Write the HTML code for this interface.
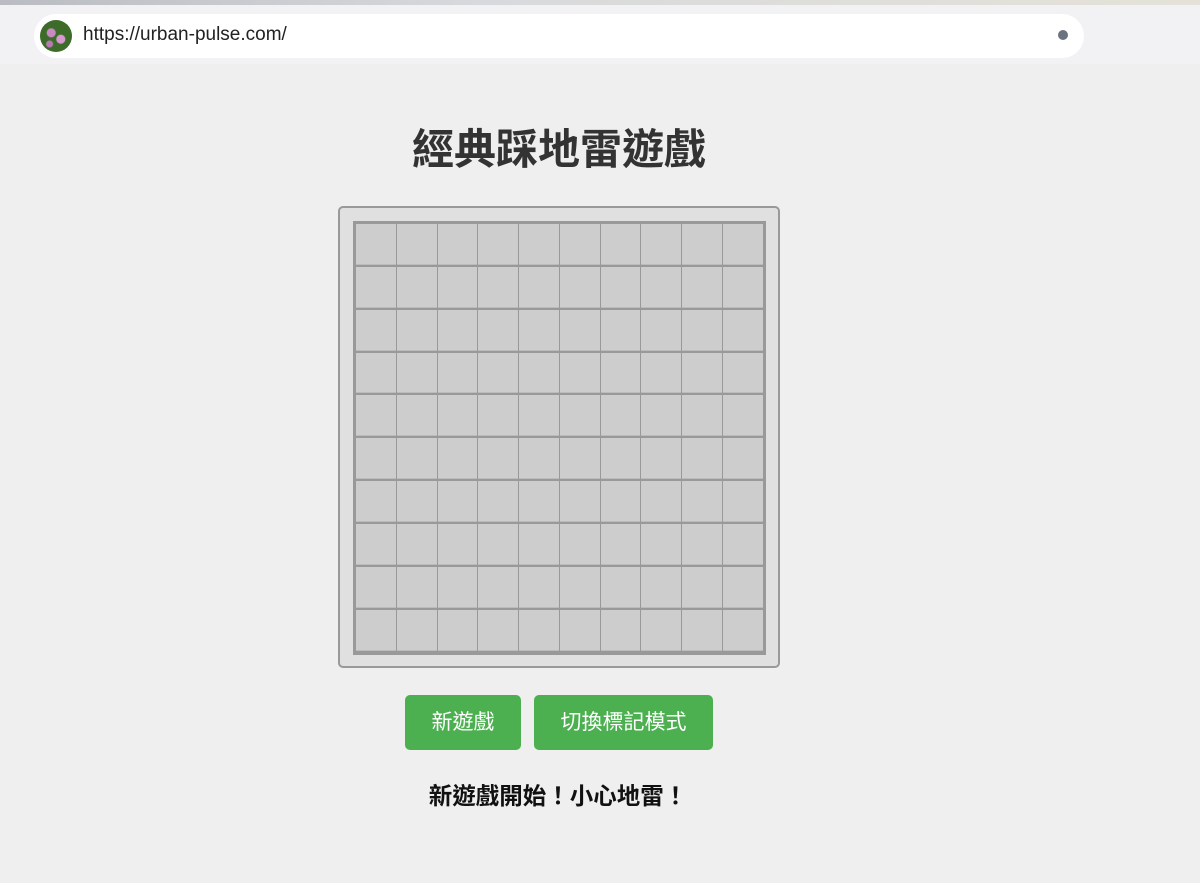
<!DOCTYPE html>
<html><head><meta charset="utf-8"><style>
body{margin:0;width:1200px;height:883px;background:#efefef;font-family:"Liberation Sans","Noto Sans CJK TC",sans-serif;position:relative;overflow:hidden}
.top{position:absolute;left:0;top:0;width:1200px;height:64px;background:#f2f2f4}
.strip{position:absolute;left:0;top:0;width:1200px;height:5px;background:linear-gradient(90deg,#b9bcc2,#d8d9dc 40%,#e4e2d8)}
.pill{position:absolute;left:34px;top:14px;width:1050px;height:44px;background:#fff;border-radius:22px}
.fav{position:absolute;left:40px;top:20px;width:32px;height:32px;border-radius:50%;background:radial-gradient(circle at 35% 40%,#c88ac0 0 4px,transparent 5px),radial-gradient(circle at 65% 60%,#d79ad0 0 4px,transparent 5px),radial-gradient(circle at 30% 75%,#b77ab5 0 3px,transparent 4px),#3d6b2a}
.url{position:absolute;left:83px;top:24px;font-size:19px;color:#222}
.dot{position:absolute;left:1058px;top:30px;width:10px;height:10px;border-radius:50%;background:#6b7280}
h1{position:absolute;left:0;width:1118px;top:116px;margin:0;text-align:center;font-size:42px;font-weight:bold;color:#333}
.box{position:absolute;left:338px;top:206px;width:438px;height:458px;border:2px solid #999;border-radius:5px;background:#e0e0e0}
.grid{position:absolute;left:353px;top:221px;width:407px;height:428px;border:3px solid #999;background:#999}
.c{position:absolute;background:#cdcdcd;box-sizing:border-box}
.btn{position:absolute;top:695px;height:55px;background:#4caf50;border-radius:5px;color:#fff;font-size:21px;line-height:55px;text-align:center}
.msg{position:absolute;left:0;width:1116px;top:777px;text-align:center;font-size:23.5px;font-weight:bold;color:#111}
</style></head><body>
<div class="top"><div class="strip"></div></div>
<div class="pill"></div><div class="fav"></div>
<div class="url">https://urban-pulse.com/</div><div class="dot"></div>
<h1>經典踩地雷遊戲</h1>
<div class="box"></div>
<div class="grid" id="g"></div>
<div class="btn" style="left:405px;width:116px">新遊戲</div>
<div class="btn" style="left:534px;width:179px">切換標記模式</div>
<div class="msg">新遊戲開始！小心地雷！</div>
<script>
var g=document.getElementById('g'),h='';
for(var r=0;r<10;r++)for(var c=0;c<10;c++){
var x=Math.round(c*40.75),y=Math.round(r*42.85);
var w=Math.round((c+1)*40.75)-x-1,hh=Math.round((r+1)*42.85)-y-2;
h+='<div class="c" style="left:'+x+'px;top:'+y+'px;width:'+w+'px;height:'+hh+'px;box-shadow:inset 0 -1px #bbb"></div>';}
g.innerHTML=h;
</script>
</body></html>
